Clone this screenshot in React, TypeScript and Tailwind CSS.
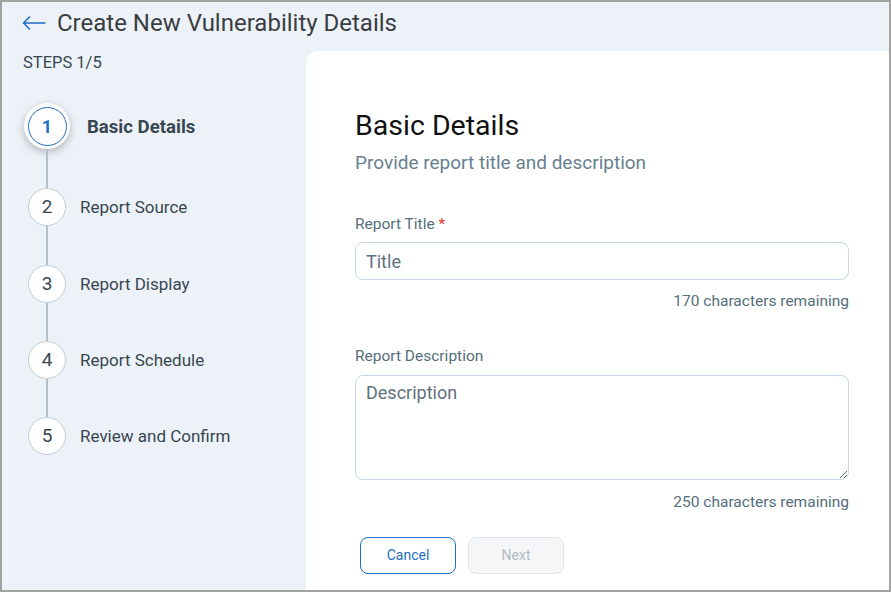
import { Fragment } from "react";

const steps = [
  "Basic Details",
  "Report Source",
  "Report Display",
  "Report Schedule",
  "Review and Confirm",
];

function BackArrow() {
  return (
    <svg width="24" height="14" viewBox="0 0 24 14" fill="none" className="shrink-0">
      <path d="M23 7H1.5M7.5 1L1.5 7l6 6" stroke="#1f6fc2" strokeWidth="1.6" strokeLinecap="round" strokeLinejoin="round" />
    </svg>
  );
}

export default function App() {
  return (
    <div className="flex h-[592px] w-[891px] flex-col border-2 border-[#a3a3a3] bg-[#edf2f9] font-['Roboto',sans-serif]">
      <header className="flex h-[49px] shrink-0 items-center pb-[7px] pl-[20px]">
        <BackArrow />
        <h1 className="ml-[11px] text-[24px] leading-7 text-[#3a3d41]">
          Create New Vulnerability Details
        </h1>
      </header>

      <div className="flex min-h-0 flex-1">
        <aside className="w-[304px] shrink-0 pt-0.5">
          <p className="pl-[21px] text-[16.5px] leading-5 text-[#37474f]">STEPS 1/5</p>

          <div className="ml-[22px] mt-[30px] grid grid-cols-[46px_auto]">
            {steps.map((s, i) => (
              <Fragment key={s}>
                {i > 0 && (
                  <div className={`flex justify-center ${i < 3 ? "h-[39px]" : "h-[38px]"}`}>
                    <div className="w-[2px] bg-[#b4c0c9]" />
                  </div>
                )}
                {i > 0 && <div />}
                {i === 0 ? (
                  <div className="flex h-[46px] w-[46px] items-center justify-center rounded-full bg-white shadow-[0_3px_8px_rgba(0,0,0,0.25)]">
                    <div className="flex h-[39px] w-[39px] items-center justify-center rounded-full border-[1.5px] border-[#1f6fc2] text-[18px] font-bold text-[#1f6fc2]">
                      1
                    </div>
                  </div>
                ) : (
                  <div className="flex h-[38px] items-center justify-center">
                    <div className="flex h-[38px] w-[38px] items-center justify-center rounded-full border border-[#c3ccd3] bg-white text-[19px] text-[#37474f]">
                      {i + 1}
                    </div>
                  </div>
                )}
                <div
                  className={`flex items-center text-[#37474f] ${
                    i === 0 ? "ml-[17px] pt-[3px] text-[18.6px] font-bold" : "ml-[10px] pt-px text-[17px]"
                  }`}
                >
                  {s}
                </div>
              </Fragment>
            ))}
          </div>
        </aside>

        <main className="flex-1 rounded-tl-xl bg-white pl-[49px] pr-[40px] pt-[58px]">
          <h2 className="text-[28.5px] leading-[34px] text-[#111]">Basic Details</h2>
          <p className="mt-2 text-[19px] leading-6 text-[#66808f]">
            Provide report title and description
          </p>

          <label className="mt-[39px] block text-[15.5px] leading-5 text-[#546e7a]">
            Report Title <span className="text-[#e53935]">*</span>
          </label>
          <input
            placeholder="Title"
            className="mt-[8px] block h-[38px] w-full rounded-lg border border-[#c6d7ec] px-[10px] text-[18px] text-[#37474f] outline-none placeholder:text-[#5f707e]"
          />
          <p className="mt-[11px] text-right text-[15.5px] leading-5 text-[#546e7a]">
            170 characters remaining
          </p>

          <label className="mt-[35px] block text-[15.5px] leading-5 text-[#546e7a]">
            Report Description
          </label>
          <textarea
            placeholder="Description"
            className="mt-[9px] block h-[105px] w-full rounded-lg border border-[#c6d7ec] px-[10px] py-[5px] text-[18px] leading-6 text-[#37474f] outline-none placeholder:text-[#5f707e]"
          />
          <p className="mt-[12px] text-right text-[15.5px] leading-5 text-[#546e7a]">
            250 characters remaining
          </p>

          <div className="ml-[5px] mt-[25px] flex gap-3">
            <button className="h-[37px] w-[96px] rounded-lg border border-[#1f6fc2] bg-white text-[14px] text-[#1f6fc2]">
              Cancel
            </button>
            <button
              disabled
              className="h-[37px] w-[96px] rounded-lg border border-[#e1e5e9] bg-[#f4f6f8] text-[14px] text-[#b3bcc4]"
            >
              Next
            </button>
          </div>
        </main>
      </div>
    </div>
  );
}
